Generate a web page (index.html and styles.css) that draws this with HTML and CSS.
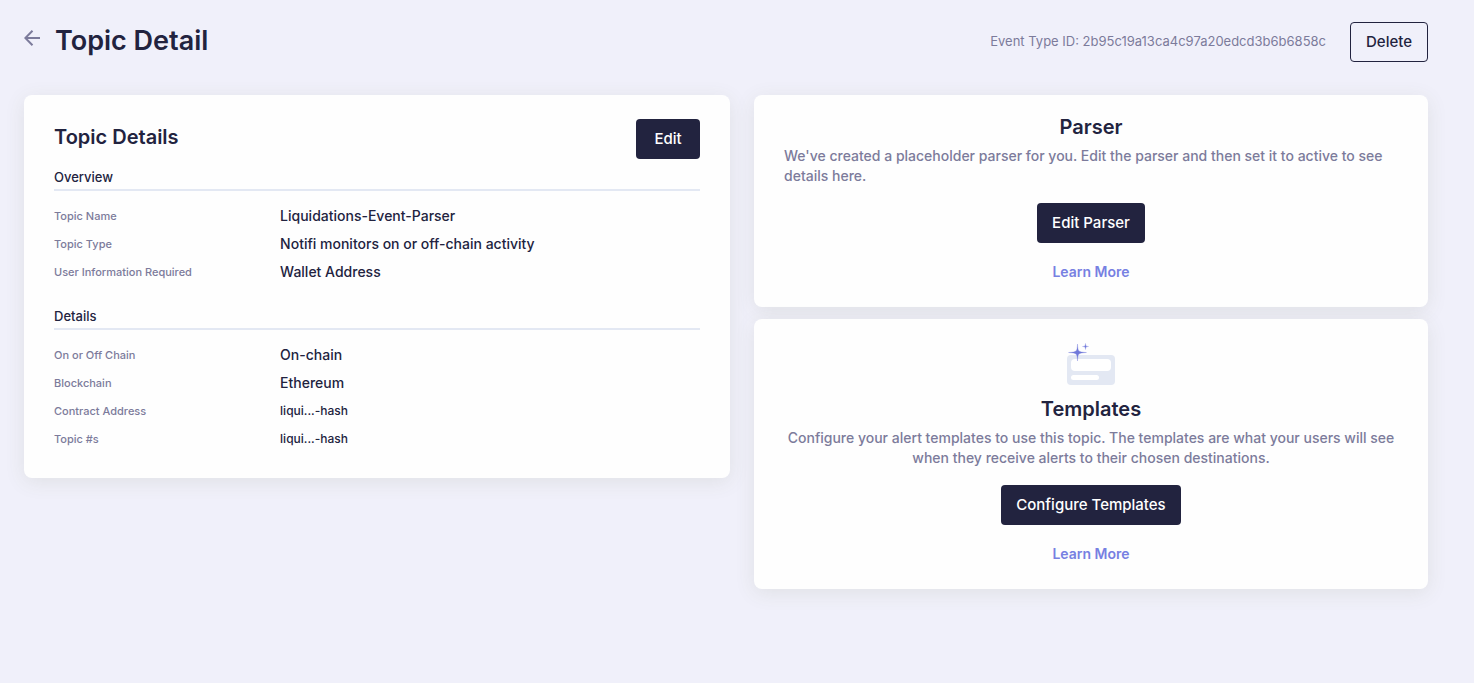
FILE: index.html
```html
<!DOCTYPE html>
<html lang="en">
<head>
<meta charset="utf-8">
<title>Topic Detail</title>
<link rel="stylesheet" href="styles.css">
</head>
<body>
<header class="page-header">
  <button class="back" type="button" aria-label="Back">
    <svg width="16" height="16" viewBox="0 0 16 16" fill="none" stroke="currentColor" stroke-width="2"><path d="M16 8H1.500M8.500 0.800L1.300 8L8.500 15.200"/></svg>
  </button>
  <h1 class="page-title">Topic Detail</h1>
  <span class="event-id">Event Type ID: 2b95c19a13ca4c97a20edcd3b6b6858c</span>
  <button class="btn btn-outline" type="button">Delete</button>
</header>
<main class="content">
  <section class="card details-card">
    <div class="card-head">
      <h2 class="card-title">Topic Details</h2>
      <button class="btn btn-edit" type="button">Edit</button>
    </div>
    <h3 class="group-title">Overview</h3>
    <dl class="fields">
      <dt>Topic Name</dt><dd>Liquidations-Event-Parser</dd>
      <dt>Topic Type</dt><dd>Notifi monitors on or off-chain activity</dd>
      <dt>User Information Required</dt><dd>Wallet Address</dd>
    </dl>
    <h3 class="group-title">Details</h3>
    <dl class="fields">
      <dt>On or Off Chain</dt><dd>On-chain</dd>
      <dt>Blockchain</dt><dd>Ethereum</dd>
      <dt>Contract Address</dt><dd class="hash">liqui...-hash</dd>
      <dt>Topic #s</dt><dd class="hash">liqui...-hash</dd>
    </dl>
  </section>
  <div class="side">
    <section class="card action-card">
      <h2 class="card-title">Parser</h2>
      <p class="text">We've created a placeholder parser for you. Edit the parser and then set it to active to see details here.</p>
      <button class="btn" type="button">Edit Parser</button>
      <a class="link" href="#">Learn More</a>
    </section>
    <section class="card action-card with-icon">
      <svg class="template-icon" width="48" height="42" viewBox="0 0 48 42">
        <rect y="12" width="48" height="30" rx="4" fill="#e3e8f3"/>
        <rect x="4" y="16" width="40" height="12" rx="4" fill="#fff"/>
        <rect x="4" y="32" width="28" height="5" rx="2.500" fill="#fff"/>
        <path d="M10.500 1C11 8.600 10.900 9 19.500 9.500C10.900 10 11 10.400 10.500 18C10 10.400 10.100 10 1.500 9.500C10.100 9 10 8.600 10.500 1Z" fill="#6f78da" stroke="#6f78da" stroke-width=".3"/>
        <path d="M18.500 0.500C18.800 3.200 18.800 3.200 21.500 3.500C18.800 3.800 18.800 3.800 18.500 6.500C18.200 3.800 18.200 3.800 15.500 3.500C18.200 3.200 18.200 3.200 18.500 0.500Z" fill="#6f78da" stroke="#6f78da" stroke-width=".3"/>
      </svg>
      <h2 class="card-title">Templates</h2>
      <p class="text">Configure your alert templates to use this topic. The templates are what your users will see when they receive alerts to their chosen destinations.</p>
      <button class="btn" type="button">Configure Templates</button>
      <a class="link" href="#">Learn More</a>
    </section>
  </div>
</main>
</body>
</html>
```
FILE: styles.css
```css
* { box-sizing: border-box; }
body {
  margin: 0;
  padding: 22px 46px 24px 24px;
  background: #f0f0fa;
  color: #22233f;
  font-family: Inter, "Liberation Sans", sans-serif;
  font-size: 14px;
  line-height: 20px;
  font-weight: 500;
}
h1, h2, h3, p, dl, dd { margin: 0; }
.page-header { display: flex; align-items: center; margin-bottom: 33px; }
.back {
  display: flex;
  margin: 0 15px 8px 0;
  padding: 0;
  border: 0;
  background: none;
  color: #7c7b9b;
}
.page-title {
  flex: 1;
  padding-bottom: 2px;
  font-size: 27px;
  line-height: 36px;
  font-weight: 600;
}
.event-id {
  margin-right: 24px;
  padding-bottom: 3px;
  font-size: 13px;
  font-weight: 400;
  color: #7c7b9b;
}
.btn {
  height: 40px;
  padding: 0 15px 1px;
  border: 0;
  border-radius: 4px;
  background: #22233f;
  color: #fff;
  font: inherit;
  font-size: 15px;
}
.btn-outline { border: 1px solid #22233f; background: none; color: #22233f; }
.btn-edit { min-width: 64px; }
.content {
  display: grid;
  grid-template-columns: 706fr 674fr;
  gap: 24px;
  align-items: start;
}
.side { display: grid; gap: 12px; }
.card {
  border-radius: 8px;
  background: #fefefe;
  box-shadow: 0 4px 20px rgba(90, 100, 50, 0.1);
}
.details-card { padding: 24px 30px 25px; }
.card-head {
  display: flex;
  justify-content: space-between;
  align-items: center;
  margin-bottom: 8px;
}
.card-title { font-size: 20px; line-height: 28px; font-weight: 600; }
.card-head .card-title { padding-bottom: 4px; }
.group-title {
  margin-bottom: 11px;
  padding-bottom: 2px;
  border-bottom: 2px solid #e3e8f3;
  font-size: 13px;
  font-weight: 500;
}
.fields { display: grid; grid-template-columns: 35% 1fr; line-height: 28px; }
.fields + .group-title { margin-top: 20px; }
.fields dt { font-size: 11px; color: #7c7b9b; }
.fields .hash { font-size: 12px; }
.action-card {
  display: flex;
  flex-direction: column;
  align-items: center;
  padding: 18px 30px 25px;
}
.with-icon { padding-top: 24px; text-align: center; }
.template-icon { margin-bottom: 10px; }
.text { margin: 5px 0 17px; color: #7c7b9b; }
.link { margin-top: 19px; color: #7780e2; font-weight: 600; text-decoration: none; }
.action-card:not(.with-icon) .text { align-self: start; }
```
